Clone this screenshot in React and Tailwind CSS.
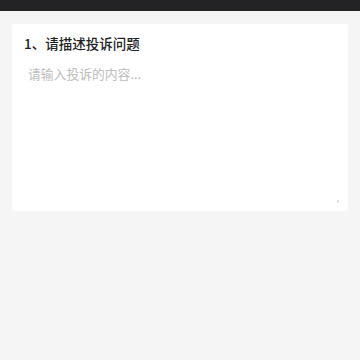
export default function App() {
  return (
    <div
      className="min-h-[360px] bg-[#f5f5f5]"
      style={{ fontFamily: '"Noto Sans CJK SC", "Noto Sans", sans-serif' }}
    >
      <div className="h-[11px] bg-[#232326]" />
      <div className="px-3 pt-[13px]">
        <div className="bg-white rounded-[3px] h-[187px] flex flex-col px-3 pt-[9px] pb-2">
          <div className="text-[13.5px] leading-[20px] font-medium text-[#222]">1、请描述投诉问题</div>
          <div className="flex-1 pt-[12px] pl-1 text-[12.8px] leading-[18px] text-[#bdbdbd]">请输入投诉的内容...</div>
          <div className="flex justify-end -mr-[3px]">
            <div className="w-[2px] h-[3px] bg-[#e2e2e2]" />
          </div>
        </div>
      </div>
    </div>
  );
}
